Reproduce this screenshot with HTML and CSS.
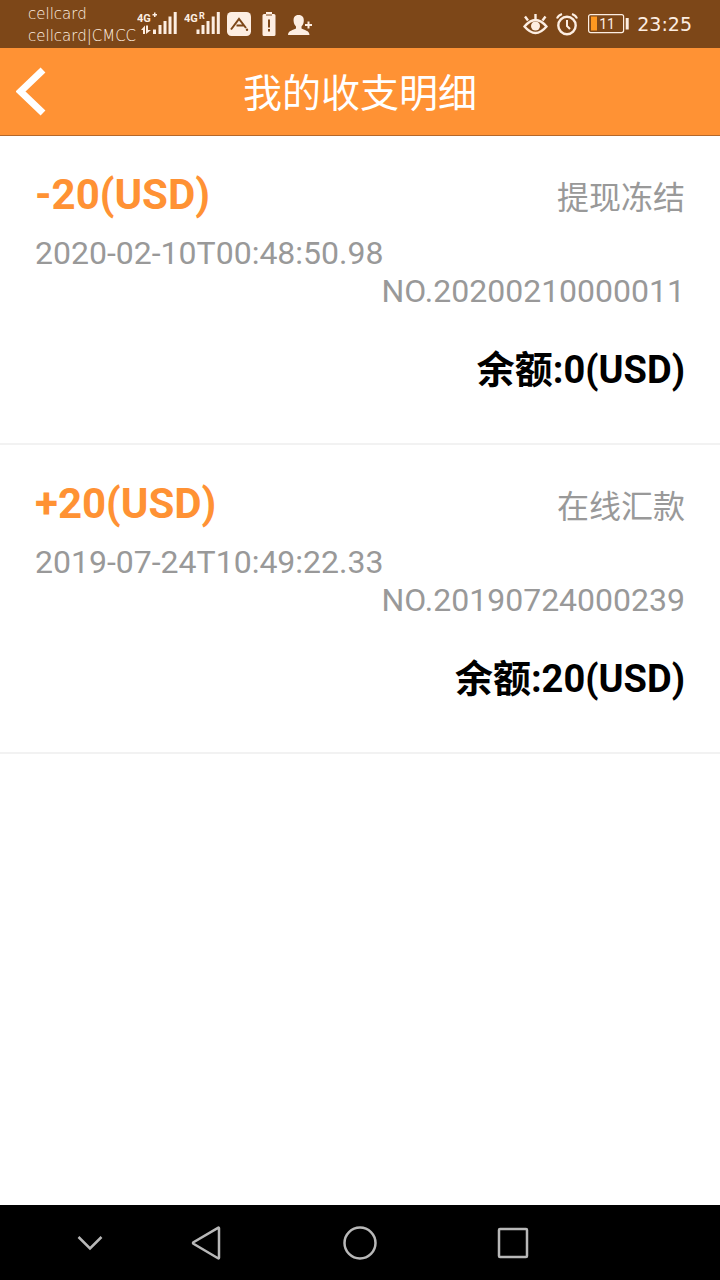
FILE: index.html
```
<!DOCTYPE html>
<html lang="zh-CN">
<head>
<meta charset="utf-8">
<meta name="viewport" content="width=device-width, initial-scale=1">
<title>我的收支明细</title>
<link rel="stylesheet" href="styles.css">
</head>
<body>
<div class="statusbar">
  <div class="carriers">
    <span>cellcard</span>
    <span>cellcard|CMCC</span>
  </div>
  <div class="status-icons">
    <svg width="40" height="26" viewBox="0 0 40 26" fill="currentColor" aria-hidden="true">
      <text class="net" x="0" y="11">4G</text>
      <path d="M15.500 3h1.500v-1.500h1.500v1.500h1.500v1.500h-1.500v1.500h-1.500v-1.500h-1.500z"/>
      <path d="M4 19l4-4.500v8.500h-2v-4zM9 14.500h2v4.500h3l-5 4z"/>
      <path d="M16 18.500h3v4.500h-3zM21.500 14h3v9h-3zM26.500 10h3v13h-3zM31.500 5.500h3v17.500h-3zM36.700 1h3v22h-3z"/>
    </svg>
    <svg width="36" height="26" viewBox="0 0 36 26" fill="currentColor" aria-hidden="true">
      <text class="net" x="0" y="11">4G</text>
      <text class="net-small" x="15" y="8">R</text>
      <path d="M12.500 18.500h3v4.500h-3zM17.500 14h3v9h-3zM22.500 10h3v13h-3zM27.700 5.500h3v17.500h-3zM32.800 1h3v22h-3z"/>
    </svg>
    <svg width="24" height="24" viewBox="0 0 24 24" aria-hidden="true">
      <rect width="24" height="24" rx="4.500" fill="currentColor"/>
      <path d="M4 17.500L12 7l7 9M9.500 13.500h7" fill="none" stroke="#7d4718" stroke-width="2"/>
      <circle cx="20" cy="17.800" r="1.200" fill="#7d4718"/>
    </svg>
    <svg class="icon-cell" width="14" height="24" viewBox="0 0 14 24" aria-hidden="true">
      <path d="M4 0h6v2h2q1.500 0 1.500 1.500v19q0 1.500-1.500 1.500h-10q-1.500 0-1.500-1.500v-19q0-1.500 1.500-1.500h2z" fill="currentColor"/>
      <path d="M4 3h6" stroke="#7d4718" stroke-width="1"/>
      <path d="M7 7.500v8M7 17v2.500" stroke="#7d4718" stroke-width="2"/>
    </svg>
    <svg class="icon-user" width="24" height="24" viewBox="0 0 24 24" fill="currentColor" aria-hidden="true">
      <path d="M10.500 3c4 0 5.500 2.500 5.300 6-.2 3-1.300 4.300-2.300 5.500v2c2.500 1.500 8 2 8 6.500h-21.500c0-4.500 5.500-5 8-6.500v-2c-1-1.200-2.200-2.500-2.400-5.500-.2-3.500 1-6 4.900-6z"/>
      <path d="M19.500 9.500h2v2.500h2.500v2h-2.500v2.500h-2v-2.500h-2.500v-2h2.500z"/>
    </svg>
  </div>
  <div class="status-right">
    <svg width="25" height="24" viewBox="0 0 25 24" fill="none" stroke="currentColor" stroke-width="2.400" aria-hidden="true">
      <path d="M1.500 14.500Q12.500 1.500 23.500 14.500Q12.500 27.500 1.500 14.500zM2 4.500l3 4M12.500 2v5M22.500 4.500l-3 4"/>
      <circle cx="12.500" cy="14" r="4.500" fill="currentColor" stroke="none"/>
    </svg>
    <svg width="22" height="24" viewBox="0 0 22 24" fill="none" stroke="currentColor" stroke-width="2.400" aria-hidden="true">
      <circle cx="11" cy="13.500" r="8.700"/>
      <path d="M11 8v6l3 3M1 6.500Q2 3.500 6 2M21 6.500Q20 3.500 16 2" stroke-width="2"/>
    </svg>
    <svg class="icon-power" width="41" height="20" viewBox="0 0 41 20" aria-hidden="true">
      <rect x=".6" y=".6" width="35" height="18" rx="2" fill="none" stroke="currentColor" stroke-width="1.200"/>
      <rect x="3" y="2.500" width="6" height="14" fill="#ff9820"/>
      <rect x="37.700" y="4" width="3" height="11.500" fill="currentColor"/>
      <text class="level" x="19" y="14.500" text-anchor="middle" fill="currentColor">11</text>
    </svg>
    <time class="clock">23:25</time>
  </div>
</div>
<header class="titlebar">
  <button class="back" type="button" aria-label="返回">
    <svg width="32" height="50" viewBox="0 0 32 50" fill="none" stroke="currentColor" stroke-width="7" aria-hidden="true">
      <path d="M27 3L4.500 24.500l22.500 21.500"/>
    </svg>
  </button>
  <h1 class="title">我的收支明细</h1>
</header>
<main class="records">
  <article class="record">
    <div class="record-head">
      <strong class="amount">-20(USD)</strong>
      <span class="kind">提现冻结</span>
    </div>
    <div class="date">2020-02-10T00:48:50.98</div>
    <div class="number">NO.20200210000011</div>
    <div class="balance">余额:0(USD)</div>
  </article>
  <article class="record">
    <div class="record-head">
      <strong class="amount">+20(USD)</strong>
      <span class="kind">在线汇款</span>
    </div>
    <div class="date">2019-07-24T10:49:22.33</div>
    <div class="number">NO.20190724000239</div>
    <div class="balance">余额:20(USD)</div>
  </article>
</main>
<nav class="navbar">
  <button class="hide" type="button" aria-label="隐藏导航栏">
    <svg width="28" height="16" viewBox="0 0 28 16"><path d="M2.500 2L14 13.500 25.500 2"/></svg>
  </button>
  <button class="key" type="button" aria-label="后退">
    <svg width="32" height="36" viewBox="0 0 32 36"><path d="M29 3.200v29.600q0 1-1 .4L3.500 18.800q-1-.8 0-1.600L28 2.800q1-.6 1 .4z"/></svg>
  </button>
  <button class="key" type="button" aria-label="主屏幕">
    <svg width="36" height="36" viewBox="0 0 36 36"><circle cx="18" cy="18" r="15.500"/></svg>
  </button>
  <button class="key" type="button" aria-label="最近任务">
    <svg width="32" height="32" viewBox="0 0 32 32"><rect x="2" y="2" width="28" height="28" rx="1"/></svg>
  </button>
</nav>
</body>
</html>
```
FILE: styles.css
```
* {
  box-sizing: border-box;
}

body {
  display: flex;
  flex-direction: column;
  min-height: 100vh;
  margin: 0;
  background: #fff;
  font-family: Roboto, "Noto Sans CJK SC", sans-serif;
}

button {
  display: flex;
  align-items: center;
  justify-content: center;
  padding: 0;
  border: 0;
  background: none;
  color: inherit;
}

svg {
  display: block;
  flex: none;
}

.statusbar {
  display: flex;
  align-items: center;
  height: 48px;
  padding: 0 28px;
  background: #7d4718;
  color: #fdeee2;
}

.carriers {
  display: flex;
  flex-direction: column;
  width: 109px;
  padding-top: 2px;
  font: 200 15px/22px "DejaVu Sans", sans-serif;
  white-space: nowrap;
  color: #fff0e2;
}

.status-icons {
  display: flex;
  align-items: center;
  gap: 7px;
}

.icon-cell {
  margin-left: 4px;
}

.icon-user {
  margin-left: 5px;
}

.net {
  font: bold 11px Roboto, sans-serif;
}

.net-small {
  font: bold 9px Roboto, sans-serif;
}

.level {
  font: 14px Roboto, sans-serif;
}

.status-right {
  display: flex;
  align-items: center;
  gap: 8px;
  margin-left: auto;
}

.icon-power {
  margin-left: 2px;
}

.clock {
  font: 19px/24px "DejaVu Sans", sans-serif;
}

.titlebar {
  display: grid;
  grid-template-columns: 64px 1fr 64px;
  align-items: center;
  height: 88px;
  border-bottom: 1px solid #b4682a;
  background: #ff9234;
  color: #fff;
}

.back {
  height: 87px;
}

.title {
  margin: 0;
  padding-top: 4px;
  font-size: 39px;
  font-weight: 400;
  line-height: 56px;
  text-align: center;
}

.records {
  flex: 1;
}

.record {
  padding: 34px 35px 50px;
  border-bottom: 2px solid #f2f2f2;
  color: #999;
  font-size: 32px;
  line-height: 38px;
}

.record-head {
  display: flex;
  align-items: baseline;
  justify-content: space-between;
  height: 50px;
  margin-bottom: 14px;
  line-height: 50px;
}

.amount {
  color: #ff9234;
  font-size: 42px;
  font-weight: 700;
}

.number {
  text-align: right;
}

.balance {
  margin-top: 37px;
  color: #000;
  font-size: 38px;
  font-weight: 700;
  line-height: 46px;
  text-align: right;
}

.navbar {
  display: grid;
  grid-template-columns: 116fr 116fr 192fr 113fr 151fr;
  align-items: center;
  height: 75px;
  padding-left: 32px;
  background: #000;
  color: #b8b8b8;
}

.navbar svg {
  fill: none;
  stroke: currentColor;
  stroke-width: 2.5;
}
```
